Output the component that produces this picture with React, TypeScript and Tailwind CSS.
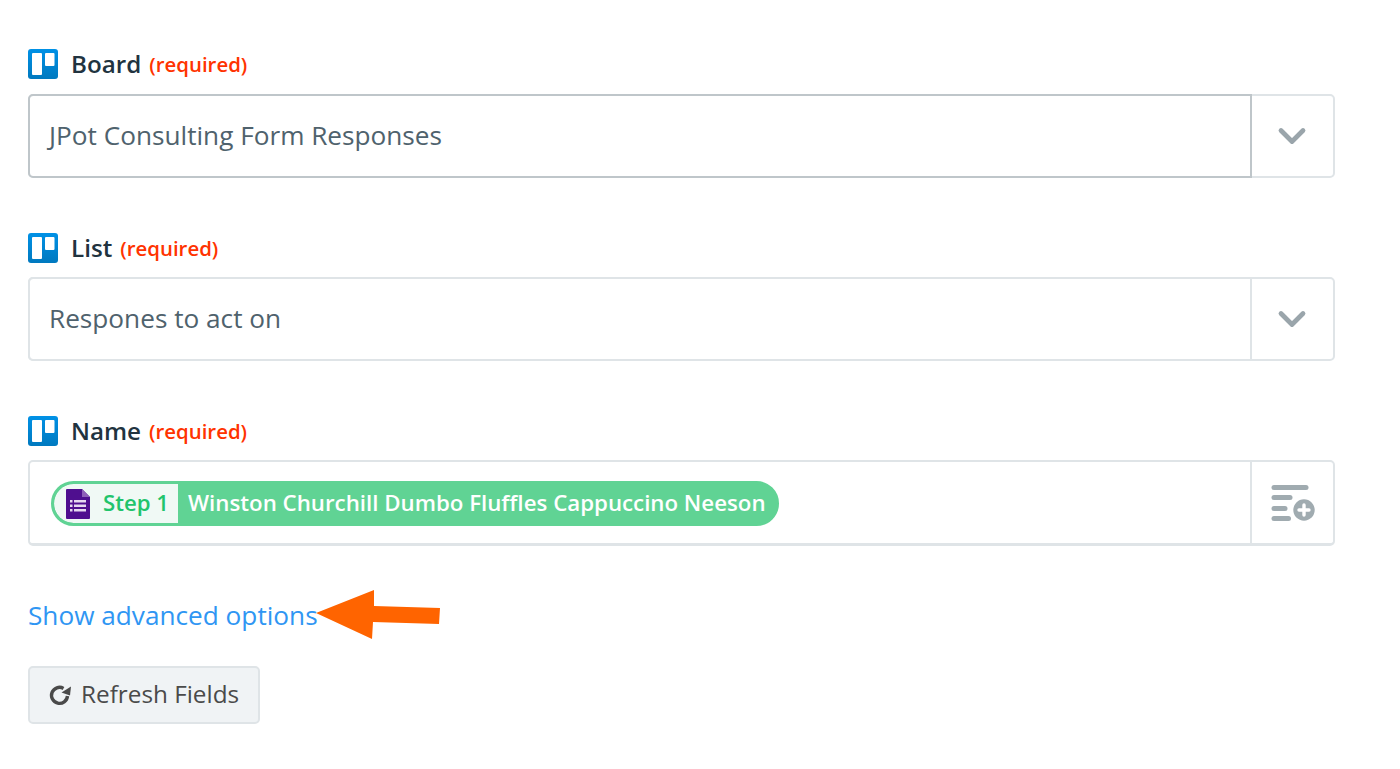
import React from "react";
import { ChevronDown } from "lucide-react";

const TrelloIcon = () => (
  <svg width="30" height="30" viewBox="0 0 30 30" className="shrink-0">
    <defs>
      <linearGradient id="trello" x1="0" y1="0" x2="0" y2="1">
        <stop offset="0" stopColor="#0091E6" />
        <stop offset="1" stopColor="#0079BF" />
      </linearGradient>
    </defs>
    <rect width="30" height="30" rx="3" fill="url(#trello)" />
    <rect x="4" y="4" width="10" height="22" rx="1" fill="#fff" />
    <rect x="17" y="4" width="9.5" height="13" rx="1" fill="#fff" />
  </svg>
);

const FieldLabel = ({ name }: { name: string }) => (
  <div className="flex items-center h-[30px]">
    <TrelloIcon />
    <span className="ml-[13px] text-[24.2px] font-semibold text-[#21333f] leading-none">{name}</span>
    <span className="ml-[8px] text-[20.4px] font-semibold text-[#ff3300] leading-none">(required)</span>
  </div>
);

const SelectField = ({ value, dark }: { value: string; dark?: boolean }) => (
  <div className="relative flex h-[84px] w-[1307px] mt-[14px] rounded-[5px] border-2 border-[#dfe4e7] bg-white">
    <div
      className={`flex items-center flex-1 -ml-[2px] -my-[2px] pl-[19px] rounded-l-[5px] border-2 text-[26.2px] text-[#4f626d] ${
        dark ? "border-[#bfc6ca]" : "border-[#dfe4e7]"
      }`}
    >
      {value}
    </div>
    <div className="flex items-center justify-center w-[81px] pr-px">
      <ChevronDown size={44} strokeWidth={2.6} className="text-[#9aa5ab]" />
    </div>
  </div>
);

const App = () => {
  return (
    <div className="relative w-[1400px] h-[769px] overflow-hidden bg-white pl-[28px] pt-[49px] font-['Open_Sans',sans-serif]">
      <FieldLabel name="Board" />
      <div className="h-px" />
      <SelectField value="JPot Consulting Form Responses" dark />

      <div className="mt-[55px]">
        <FieldLabel name="List" />
      </div>
      <SelectField value="Respones to act on" />

      <div className="mt-[55px]">
        <FieldLabel name="Name" />
      </div>
      <div className="flex h-[86px] w-[1307px] mt-[14px] rounded-[5px] border-2 border-b-[3px] border-[#dfe4e7] bg-white">
        <div className="flex items-center flex-1 pl-[21px] pt-[2px] border-r-2 border-[#dfe4e7]">
          <div className="flex items-stretch h-[45px] rounded-full bg-[#60d394] border-[3px] border-[#60d394] overflow-hidden">
            <div className="flex items-center bg-[#f0f9f5] rounded-l-full pl-[12px] pr-[9px]">
              <svg width="24" height="30" viewBox="0 0 24 30">
                <path d="M1 0H16L24 8V29a1 1 0 0 1-1 1H1a1 1 0 0 1-1-1V1a1 1 0 0 1 1-1Z" fill="#4f0f8f" />
                <path d="M16 0L24 8H16Z" fill="#8f5fb8" />
                <g fill="#e6d9f0">
                  <rect x="4" y="11" width="2.5" height="2.5" />
                  <rect x="8" y="11" width="12" height="2.5" />
                  <rect x="4" y="15.5" width="2.5" height="2.5" />
                  <rect x="8" y="15.5" width="12" height="2.5" />
                  <rect x="4" y="20" width="2.5" height="2.5" />
                  <rect x="8" y="20" width="12" height="2.5" />
                </g>
              </svg>
              <span className="ml-[13px] text-[22.2px] font-semibold text-[#21c46c] leading-none">Step 1</span>
            </div>
            <div className="flex items-center pl-[10px] pr-[10px] text-[22.28px] font-semibold text-white leading-none whitespace-nowrap">
              Winston Churchill Dumbo Fluffles Cappuccino Neeson
            </div>
          </div>
        </div>
        <div className="flex items-center justify-center w-[81px]">
          <svg width="46" height="36" viewBox="0 0 46 36">
            <g fill="#a0abb0">
              <rect x="1.5" y="0" width="37" height="5" rx="2.5" />
              <rect x="1.5" y="10" width="21" height="5" rx="2.5" />
              <rect x="1.5" y="21" width="16" height="5" rx="2.5" />
              <rect x="1.5" y="31" width="19.5" height="5" rx="2.5" />
              <circle cx="34" cy="25" r="10.7" />
            </g>
            <path d="M34 20V30M29 25H39" stroke="#fff" strokeWidth="3.4" strokeLinecap="round" />
          </svg>
        </div>
      </div>

      <div className="mt-[50px] text-[26.2px] leading-[38px] text-[#2f96f3]">Show advanced options</div>

      <button className="flex items-center h-[58px] w-[232px] mt-[32px] pl-[18px] rounded-[5px] border-2 border-[#dfe4e7] bg-[#f0f3f5] text-[24.3px] text-[#4a4a4a]">
        <svg width="24" height="24" viewBox="0 0 24 24" className="mr-[9px]">
          <path d="M19.5 13a8 8 0 1 1-4-7.6" fill="none" stroke="#4a4a4a" strokeWidth="3.4" />
          <path d="M23 3.5L22 12.5L13.5 9.5Z" fill="#4a4a4a" />
        </svg>
        <span className="-translate-y-px">Refresh Fields</span>
      </button>

      <svg className="absolute left-[310px] top-[585px]" width="135" height="60" viewBox="0 0 135 60">
        <path d="M6 28L64 5L64 21L130 23L129 39L63 37L62 54Z" fill="#ff6400" />
      </svg>
    </div>
  );
};

export default App;
